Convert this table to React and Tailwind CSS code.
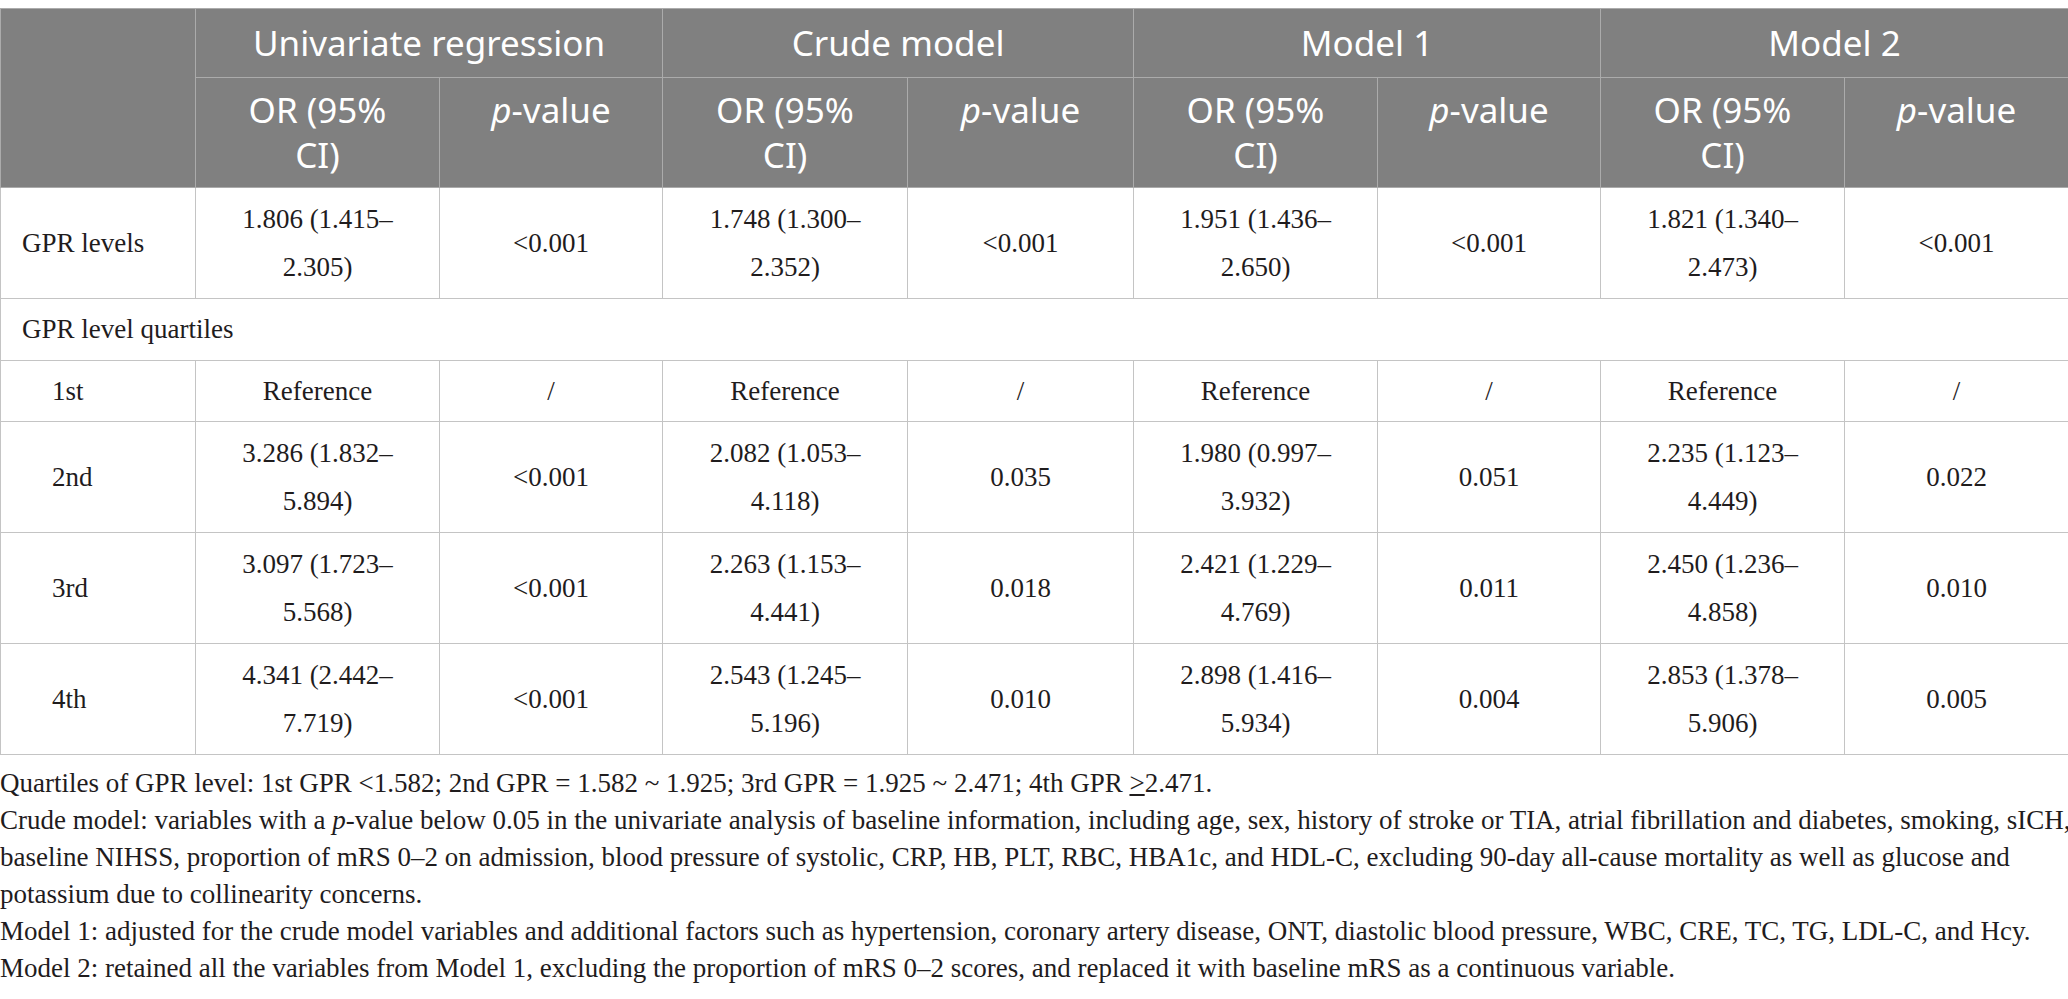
import React from 'react';

const groups = ['Univariate regression', 'Crude model', 'Model 1', 'Model 2'];

const rows = [
  { label: 'GPR levels', indent: false, cells: [['1.806 (1.415–', '2.305)'], '<0.001', ['1.748 (1.300–', '2.352)'], '<0.001', ['1.951 (1.436–', '2.650)'], '<0.001', ['1.821 (1.340–', '2.473)'], '<0.001'] },
  { section: 'GPR level quartiles' },
  { label: '1st', indent: true, short: true, cells: ['Reference', '/', 'Reference', '/', 'Reference', '/', 'Reference', '/'] },
  { label: '2nd', indent: true, cells: [['3.286 (1.832–', '5.894)'], '<0.001', ['2.082 (1.053–', '4.118)'], '0.035', ['1.980 (0.997–', '3.932)'], '0.051', ['2.235 (1.123–', '4.449)'], '0.022'] },
  { label: '3rd', indent: true, cells: [['3.097 (1.723–', '5.568)'], '<0.001', ['2.263 (1.153–', '4.441)'], '0.018', ['2.421 (1.229–', '4.769)'], '0.011', ['2.450 (1.236–', '4.858)'], '0.010'] },
  { label: '4th', indent: true, cells: [['4.341 (2.442–', '7.719)'], '<0.001', ['2.543 (1.245–', '5.196)'], '0.010', ['2.898 (1.416–', '5.934)'], '0.004', ['2.853 (1.378–', '5.906)'], '0.005'] },
];

const sans = 'font-["Noto_Sans","Open_Sans",sans-serif]';
const serif = 'font-["Liberation_Serif","Times_New_Roman",serif]';

function Cell({ v }) {
  if (Array.isArray(v)) {
    return (
      <td className="border border-[#c4c4c4] text-center align-middle leading-[48px]">
        {v[0]}<br />{v[1]}
      </td>
    );
  }
  return <td className="border border-[#c4c4c4] text-center align-middle">{v}</td>;
}

export default function App() {
  return (
    <div className="w-[2068px] bg-white pt-2 text-[#1f1c1d]">
      <table className={`w-full table-fixed border-collapse ${serif} text-[27px]`}>
        <colgroup>
          <col className="w-[195px]" />
          <col className="w-[244px]" />
          <col className="w-[223px]" />
          <col className="w-[245px]" />
          <col className="w-[226px]" />
          <col className="w-[244px]" />
          <col className="w-[223px]" />
          <col className="w-[244px]" />
          <col className="w-[224px]" />
        </colgroup>
        <thead className={`${sans} bg-[#808080] text-white text-[35px] font-normal`}>
          <tr className="h-[69px]">
            <th rowSpan={2} className="border border-[#ababab]" />
            {groups.map(g => (
              <th key={g} colSpan={2} className="border border-[#ababab] font-normal align-middle">{g}</th>
            ))}
          </tr>
          <tr className="h-[110px]">
            {groups.map(g => (
              <React.Fragment key={g}>
                <th className="border border-[#ababab] font-normal align-top pt-[9px] leading-[45px]">OR (95%<br />CI)</th>
                <th className="border border-[#ababab] font-normal align-top pt-[9px] leading-[45px]"><i>p</i>-value</th>
              </React.Fragment>
            ))}
          </tr>
        </thead>
        <tbody>
          {rows.map((r, i) => r.section ? (
            <tr key={i} className="h-[62px]">
              <td colSpan={9} className="border border-[#c4c4c4] pl-[21px] align-middle">{r.section}</td>
            </tr>
          ) : (
            <tr key={i} className={r.short ? 'h-[61px]' : 'h-[111px]'}>
              <td className={`border border-[#c4c4c4] align-middle ${r.indent ? 'pl-[51px]' : 'pl-[21px]'}`}>{r.label}</td>
              {r.cells.map((c, j) => <Cell key={j} v={c} />)}
            </tr>
          ))}
        </tbody>
      </table>
      <div className={`${serif} text-[27px] leading-[37px] mt-[10px] whitespace-nowrap`}>
        <p>Quartiles of GPR level: 1st GPR &lt;1.582; 2nd GPR = 1.582 ~ 1.925; 3rd GPR = 1.925 ~ 2.471; 4th GPR <u>&gt;</u>2.471.</p>
        <p>
          Crude model: variables with a <i>p</i>-value below 0.05 in the univariate analysis of baseline information, including age, sex, history of stroke or TIA, atrial fibrillation and diabetes, smoking, sICH,<br />
          baseline NIHSS, proportion of mRS 0–2 on admission, blood pressure of systolic, CRP, HB, PLT, RBC, HBA1c, and HDL-C, excluding 90-day all-cause mortality as well as glucose and<br />
          potassium due to collinearity concerns.
        </p>
        <p>Model 1: adjusted for the crude model variables and additional factors such as hypertension, coronary artery disease, ONT, diastolic blood pressure, WBC, CRE, TC, TG, LDL-C, and Hcy.</p>
        <p>Model 2: retained all the variables from Model 1, excluding the proportion of mRS 0–2 scores, and replaced it with baseline mRS as a continuous variable.</p>
      </div>
    </div>
  );
}
